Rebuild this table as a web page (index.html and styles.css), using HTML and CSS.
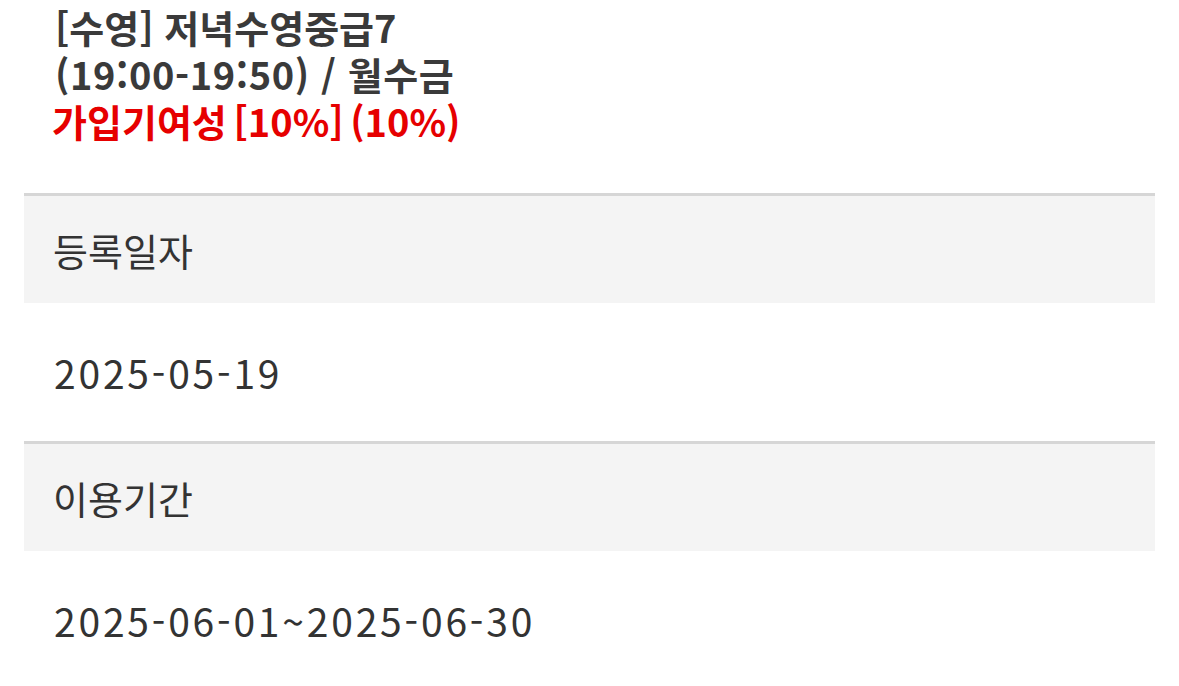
FILE: index.html
```html
<!DOCTYPE html>
<html lang="ko">
<head>
<meta charset="utf-8">
<link rel="stylesheet" href="styles.css">
</head>
<body>
<div class="page">
  <div class="title">
    <div class="title-line">[수영] 저녁수영중급7</div>
    <div class="title-line time">(19:00-19:50) / 월수금</div>
    <div class="title-line red">가입기여성 [10%] (10%)</div>
  </div>
  <div class="table">
    <div class="th">등록일자</div>
    <div class="td">2025-05-19</div>
    <div class="th">이용기간</div>
    <div class="td">2025-06-01~2025-06-30</div>
  </div>
</div>
</body>
</html>
```

FILE: styles.css
```css
html, body {
  margin: 0;
  padding: 0;
  background: #fff;
}
body {
  font-family: "Noto Sans CJK KR", "Noto Sans", sans-serif;
  color: #333;
}
.page {
  padding: 0 24px;
}
.title {
  padding: 3px 0 0 31px;
  font-weight: bold;
  font-size: 38px;
  line-height: 47px;
  color: #3a3a3a;
}
.title .time {
  letter-spacing: 0.6px;
}
.title .red {
  color: #e60000;
  margin-left: -3px;
  word-spacing: -4px;
}
.table {
  margin-top: 49px;
}
.th {
  border-top: 3px solid #d6d6d6;
  background: #f4f4f4;
  height: 107px;
  display: flex;
  align-items: center;
  padding-left: 29px;
  font-size: 38px;
}
.td {
  height: 138px;
  display: flex;
  align-items: center;
  padding-left: 30px;
  font-size: 39px;
  letter-spacing: 2.8px;
}
```
